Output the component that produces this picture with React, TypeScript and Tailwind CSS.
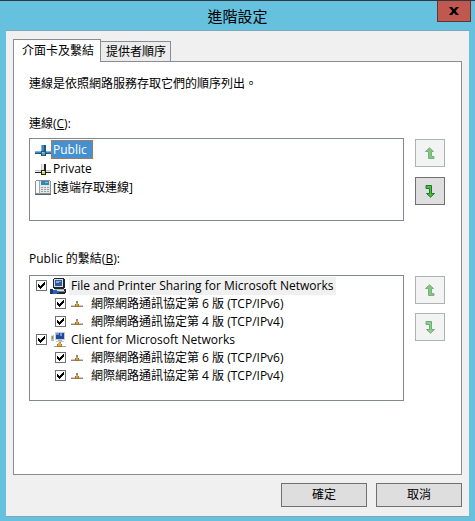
import { useState } from "react";

type Binding = {
  name: string;
  kind: "server" | "client";
  protocols: string[];
};

const connections = [
  { id: "public", name: "Public" },
  { id: "private", name: "Private" },
  { id: "remote", name: "[遠端存取連線]" },
];

const protocols = [
  "網際網路通訊協定第 6 版 (TCP/IPv6)",
  "網際網路通訊協定第 4 版 (TCP/IPv4)",
];

const bindings: Binding[] = [
  {
    name: "File and Printer Sharing for Microsoft Networks",
    kind: "server",
    protocols,
  },
  { name: "Client for Microsoft Networks", kind: "client", protocols },
];

function LanIcon({ selected }: { selected: boolean }) {
  const light = selected ? "#7db4de" : "#c8c8c8";
  const mid = selected ? "#3f86bd" : "#e8e8e8";
  const dark = selected ? "#1d5688" : "#202020";
  return (
    <svg width="16" height="13" viewBox="0 0 16 13" shapeRendering="crispEdges">
      <path fill={light} d="M6 2h1v6h-1zM0 8h6v1h-6zM11 8h5v1h-5z" />
      <path fill={mid} d="M7 2h2v6h-2zM0 9h6v1h-6zM11 9h5v1h-5z" />
      <path fill={dark} d="M9 2h2v6h-2zM0 10h6v1h-6zM11 10h5v1h-5zM6 8h5v5h-5z" />
      <path fill={selected ? "#5aa58c" : "#d8d23c"} d="M7 9h3v3h-3z" />
      <path fill={selected ? "#a8d6b4" : "#fbfad0"} d="M7 9h2v1h-2z" />
    </svg>
  );
}

function PhoneIcon() {
  return (
    <svg width="16" height="16" viewBox="0 0 16 16" shapeRendering="crispEdges">
      <path fill="#8b9095" d="M1 0h14v1h1v14h-16v-14h1z" />
      <path fill="#e4e6e8" d="M1 1h14v12h-14z" />
      <path fill="#f8f8f8" d="M1 1h3v12h-3z" />
      <path fill="#a2a7ab" d="M4 1h1v13h-1z" />
      <path fill="#3188b4" d="M6 1h8v4h-8z" />
      <path fill="#7cc4e2" d="M10 2h3v1h-3z" />
      <path
        fill="#9ba0a5"
        d="M6 7h2v1h-2zM9 7h2v1h-2zM12 7h2v1h-2zM6 9h2v1h-2zM9 9h2v1h-2zM12 9h2v1h-2zM6 11h2v1h-2zM9 11h2v1h-2zM12 11h2v1h-2z"
      />
      <path fill="#5f6468" d="M0 14h16v1h-16z" />
    </svg>
  );
}

function ServerIcon() {
  return (
    <svg width="16" height="16" viewBox="0 0 16 16" shapeRendering="crispEdges">
      <path fill="#20242c" d="M4 0h10v1h1v9h-1v1h2v4h-1v1h-10v-5h-1v-1h-1v-9h1z" />
      <path fill="#d5dce4" d="M4 1h9v8h-9z" />
      <path fill="#2c5a9c" d="M5 2h7v6h-7z" />
      <path fill="#78b0e4" d="M6 3h5v1h-5zM6 4h3v1h-3z" />
      <path fill="#aeb6bd" d="M5 11h9v1h-9z" />
      <path fill="#e0e3e6" d="M6 12h8v1h-8z" />
      <path fill="#7b858e" d="M7 13h8v1h-8z" />
      <path fill="#123a7c" d="M0 11h3v5h-3z" />
      <path fill="#2a62b0" d="M3 12h4v1h2v2h-2v1h-4z" />
    </svg>
  );
}

function ClientIcon() {
  return (
    <svg width="16" height="16" viewBox="0 0 16 16" shapeRendering="crispEdges">
      <path fill="#b4b9be" d="M1 3h3v6h-3z" />
      <path fill="#e5e8ea" d="M1 3h2v1h-2z" />
      <path fill="#66a33b" d="M2 4h1v3h-1z" />
      <path fill="#c5ccd4" d="M5 0h10v8h-10z" />
      <path fill="#24479c" d="M6 1h8v6h-8z" />
      <path fill="#6d97da" d="M6 1h3v2h-3zM10 1h2v3h-2z" />
      <path fill="#a4abb2" d="M8 8h4v1h-4z" />
      <path fill="#c5cacf" d="M6 9h8v1h-8z" />
      <path fill="#9b9b9b" d="M9 10h2v2h-2zM4 14h12v1h-12z" />
      <path fill="#b07a1c" d="M7 12h5v3h-5z" />
      <path fill="#e8a92e" d="M8 11h3v3h-3z" />
    </svg>
  );
}

function ProtocolIcon() {
  return (
    <svg width="12" height="7" viewBox="0 0 12 7" shapeRendering="crispEdges">
      <path fill="#888888" d="M5 0h2v2h-2zM0 5h12v1h-12z" />
      <path fill="#c8c8c8" d="M0 4h4v1h-4zM8 4h4v1h-4z" />
      <path fill="#a8701a" d="M4 3h4v3h-4z" />
      <path fill="#e0a030" d="M5 2h2v3h-2z" />
    </svg>
  );
}

function OrderButton({
  direction,
  label,
  disabled = false,
}: {
  direction: "up" | "down";
  label: string;
  disabled?: boolean;
}) {
  return (
    <button
      type="button"
      aria-label={label}
      disabled={disabled}
      className="flex h-7 w-[30px] items-center justify-center border border-[#707070] bg-[#dedede] disabled:border-[#adb2b5] disabled:bg-[#f3f3f3]"
    >
      <svg
        width="10"
        height="13"
        viewBox="0 0 10 13"
        className={disabled ? "opacity-60" : ""}
      >
        {direction === "up" ? (
          <path
            fill="#43a52a"
            stroke="#1c8a3a"
            d="M4.500 .8L8.500 4.500H6.500V9.500H9V11.500H3.500V4.500H.5Z"
          />
        ) : (
          <path
            fill="#5cb81c"
            stroke="#0f7d45"
            d="M5.500 12.200L1.500 8.500H4.500V3.500H1V.5H6.500V8.500H9.500Z"
          />
        )}
      </svg>
    </button>
  );
}

function CheckBox({ id }: { id: string }) {
  return (
    <span className="relative mb-px flex size-[11px] shrink-0">
      <input
        id={id}
        type="checkbox"
        defaultChecked
        className="peer size-[11px] appearance-none border border-[#707070] bg-white"
      />
      <svg
        viewBox="0 0 11 11"
        shapeRendering="crispEdges"
        className="pointer-events-none absolute inset-0 hidden size-[11px] peer-checked:block"
      >
        <path
          fill="#000"
          d="M2 4h1v3h-1zM3 5h1v3h-1zM4 6h1v3h-1zM5 5h1v3h-1zM6 4h1v3h-1zM7 3h1v3h-1zM8 2h1v3h-1z"
        />
      </svg>
    </span>
  );
}

function App() {
  const [selected, setSelected] = useState("public");

  return (
    <div className="min-h-screen flex flex-col border-t border-[#333840] bg-[#66c1de] text-xs text-black font-['Open_Sans','Noto_Sans_CJK_TC',sans-serif]">
      <header className="grid grid-cols-[1fr_auto_1fr] h-[29px]">
        <h1 className="col-start-2 self-center text-[15px] leading-5">進階設定</h1>
        <button
          type="button"
          aria-label="關閉"
          className="mr-1 flex h-[21px] w-[34px] items-center justify-center justify-self-end border border-t-0 border-[#603634] bg-[#c0584f]"
        >
          <svg width="10" height="8" viewBox="0 0 10 8">
            <path fill="#000" d="M0 0h3l2 2.300L7 0h3L6.600 4L10 8H7L5 5.700L3 8H0L3.400 4z" />
          </svg>
        </button>
      </header>

      <main className="mx-1.5 mb-1 flex grow flex-col border-y border-[#7fa9ba] bg-[#f0f0f0] px-[7px] pt-2 pb-[9px]">
        <div role="tablist" className="flex items-end">
          <button
            type="button"
            role="tab"
            aria-selected="true"
            className="relative -mb-px h-[23px] border border-b-0 border-[#898c95] bg-white pr-1.5 pl-2 leading-4"
          >
            介面卡及繫結
          </button>
          <button
            type="button"
            role="tab"
            aria-selected="false"
            className="h-5 border border-b-0 border-l-0 border-[#898c95] bg-[#ececec] pr-1 pl-[5px] leading-4"
          >
            提供者順序
          </button>
        </div>

        <section
          role="tabpanel"
          className="grow border border-[#898c95] bg-white pt-3 pr-4 pl-[15px]"
        >
          <p className="leading-5">連線是依照網路服務存取它們的順序列出。</p>

          <h2 id="connections" className="mt-5 leading-5">
            連線(<u>C</u>):
          </h2>
          <div className="mt-1 flex gap-[11px]">
            <ul
              aria-labelledby="connections"
              className="h-[83px] grow border border-[#828790] pt-px pl-[5px]"
            >
              {connections.map((item) => (
                <li key={item.id}>
                  <button
                    type="button"
                    aria-pressed={selected === item.id}
                    onClick={() => setSelected(item.id)}
                    className="flex h-[19px] items-center"
                  >
                    <span className="flex w-4 justify-center">
                      {item.id === "remote" ? (
                        <PhoneIcon />
                      ) : (
                        <LanIcon selected={selected === item.id} />
                      )}
                    </span>
                    <span
                      className={
                        selected === item.id
                          ? "h-[19px] border border-dashed border-[#d0702c] bg-[#4590d0] pr-[5px] pl-px leading-[18px] text-white"
                          : "pl-0.5"
                      }
                    >
                      {item.name}
                    </span>
                  </button>
                </li>
              ))}
            </ul>
            <div className="flex flex-col gap-2.5 pt-px">
              <OrderButton direction="up" label="連線上移" disabled />
              <OrderButton direction="down" label="連線下移" />
            </div>
          </div>

          <h2 id="bindings" className="mt-7 leading-5">
            Public 的繫結(<u>B</u>):
          </h2>
          <div className="mt-1.5 flex gap-[11px]">
            <ul
              aria-labelledby="bindings"
              className="h-[126px] grow border border-[#828790] pt-px pl-1.5"
            >
              {bindings.map((item) => (
                <li key={item.kind}>
                  <div className="flex h-[18px] items-center">
                    <CheckBox id={item.kind} />
                    <label htmlFor={item.kind} className="ml-[3px] flex items-center">
                      {item.kind === "server" ? <ServerIcon /> : <ClientIcon />}
                      <span
                        className={
                          item.kind === "server"
                            ? "ml-[3px] bg-[#f0f0f0] px-0.5 leading-[18px]"
                            : "ml-[3px] px-0.5 leading-[18px]"
                        }
                      >
                        {item.name}
                      </span>
                    </label>
                  </div>
                  <ul className="pl-[19px]">
                    {item.protocols.map((protocol, i) => (
                      <li key={protocol} className="flex h-[18px] items-center">
                        <CheckBox id={`${item.kind}-${i}`} />
                        <label
                          htmlFor={`${item.kind}-${i}`}
                          className="ml-[5px] flex items-center gap-2 leading-[18px]"
                        >
                          <ProtocolIcon />
                          {protocol}
                        </label>
                      </li>
                    ))}
                  </ul>
                </li>
              ))}
            </ul>
            <div className="flex flex-col gap-[9px] pt-px">
              <OrderButton direction="up" label="繫結上移" disabled />
              <OrderButton direction="down" label="繫結下移" disabled />
            </div>
          </div>
        </section>

        <footer className="mt-2 flex justify-end gap-[9px]">
          <button
            type="button"
            className="h-6 w-[86px] border border-[#707070] bg-[#dedede]"
          >
            確定
          </button>
          <button
            type="button"
            className="h-6 w-[86px] border border-[#707070] bg-[#dedede]"
          >
            取消
          </button>
        </footer>
      </main>
    </div>
  );
}

export default App;
